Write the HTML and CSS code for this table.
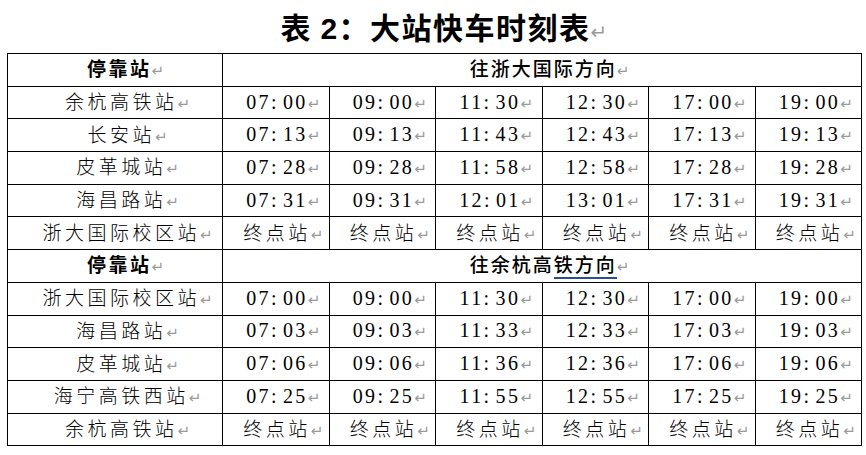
FILE: index.html
```html
<!DOCTYPE html>
<html lang="zh-CN">
<head>
<meta charset="utf-8">
<title>表 2：大站快车时刻表</title>
<link rel="stylesheet" href="styles.css">
</head>
<body>
<div class="page">
  <h1 class="title">表 <span class="tnum">2</span>：大站快车时刻表<span class="pm">↵</span></h1>
  <table class="sched">
    <colgroup>
      <col class="c-st"><col class="c-t"><col class="c-t"><col class="c-t"><col class="c-t"><col class="c-t"><col class="c-t">
    </colgroup>
    <tbody>
      <tr class="hd"><td class="st b">停靠站<span class="pm">↵</span></td><td colspan="6" class="dir">往浙大国际方向<span class="pm">↵</span></td></tr>
      <tr><td class="st">余杭高铁站<span class="pm">↵</span></td><td class="t">07<span class="c">:</span>00<span class="pm">↵</span></td><td class="t">09<span class="c">:</span>00<span class="pm">↵</span></td><td class="t">11<span class="c">:</span>30<span class="pm">↵</span></td><td class="t">12<span class="c">:</span>30<span class="pm">↵</span></td><td class="t">17<span class="c">:</span>00<span class="pm">↵</span></td><td class="t">19<span class="c">:</span>00<span class="pm">↵</span></td></tr>
      <tr><td class="st">长安站<span class="pm">↵</span></td><td class="t">07<span class="c">:</span>13<span class="pm">↵</span></td><td class="t">09<span class="c">:</span>13<span class="pm">↵</span></td><td class="t">11<span class="c">:</span>43<span class="pm">↵</span></td><td class="t">12<span class="c">:</span>43<span class="pm">↵</span></td><td class="t">17<span class="c">:</span>13<span class="pm">↵</span></td><td class="t">19<span class="c">:</span>13<span class="pm">↵</span></td></tr>
      <tr><td class="st">皮革城站<span class="pm">↵</span></td><td class="t">07<span class="c">:</span>28<span class="pm">↵</span></td><td class="t">09<span class="c">:</span>28<span class="pm">↵</span></td><td class="t">11<span class="c">:</span>58<span class="pm">↵</span></td><td class="t">12<span class="c">:</span>58<span class="pm">↵</span></td><td class="t">17<span class="c">:</span>28<span class="pm">↵</span></td><td class="t">19<span class="c">:</span>28<span class="pm">↵</span></td></tr>
      <tr><td class="st">海昌路站<span class="pm">↵</span></td><td class="t">07<span class="c">:</span>31<span class="pm">↵</span></td><td class="t">09<span class="c">:</span>31<span class="pm">↵</span></td><td class="t">12<span class="c">:</span>01<span class="pm">↵</span></td><td class="t">13<span class="c">:</span>01<span class="pm">↵</span></td><td class="t">17<span class="c">:</span>31<span class="pm">↵</span></td><td class="t">19<span class="c">:</span>31<span class="pm">↵</span></td></tr>
      <tr><td class="st">浙大国际校区站<span class="pm">↵</span></td><td class="end">终点站<span class="pm">↵</span></td><td class="end">终点站<span class="pm">↵</span></td><td class="end">终点站<span class="pm">↵</span></td><td class="end">终点站<span class="pm">↵</span></td><td class="end">终点站<span class="pm">↵</span></td><td class="end">终点站<span class="pm">↵</span></td></tr>
      <tr class="hd"><td class="st b">停靠站<span class="pm">↵</span></td><td colspan="6" class="dir">往余杭高<span class="ul">铁方向</span><span class="pm">↵</span></td></tr>
      <tr><td class="st">浙大国际校区站<span class="pm">↵</span></td><td class="t">07<span class="c">:</span>00<span class="pm">↵</span></td><td class="t">09<span class="c">:</span>00<span class="pm">↵</span></td><td class="t">11<span class="c">:</span>30<span class="pm">↵</span></td><td class="t">12<span class="c">:</span>30<span class="pm">↵</span></td><td class="t">17<span class="c">:</span>00<span class="pm">↵</span></td><td class="t">19<span class="c">:</span>00<span class="pm">↵</span></td></tr>
      <tr><td class="st">海昌路站<span class="pm">↵</span></td><td class="t">07<span class="c">:</span>03<span class="pm">↵</span></td><td class="t">09<span class="c">:</span>03<span class="pm">↵</span></td><td class="t">11<span class="c">:</span>33<span class="pm">↵</span></td><td class="t">12<span class="c">:</span>33<span class="pm">↵</span></td><td class="t">17<span class="c">:</span>03<span class="pm">↵</span></td><td class="t">19<span class="c">:</span>03<span class="pm">↵</span></td></tr>
      <tr><td class="st">皮革城站<span class="pm">↵</span></td><td class="t">07<span class="c">:</span>06<span class="pm">↵</span></td><td class="t">09<span class="c">:</span>06<span class="pm">↵</span></td><td class="t">11<span class="c">:</span>36<span class="pm">↵</span></td><td class="t">12<span class="c">:</span>36<span class="pm">↵</span></td><td class="t">17<span class="c">:</span>06<span class="pm">↵</span></td><td class="t">19<span class="c">:</span>06<span class="pm">↵</span></td></tr>
      <tr><td class="st">海宁高铁西站<span class="pm">↵</span></td><td class="t">07<span class="c">:</span>25<span class="pm">↵</span></td><td class="t">09<span class="c">:</span>25<span class="pm">↵</span></td><td class="t">11<span class="c">:</span>55<span class="pm">↵</span></td><td class="t">12<span class="c">:</span>55<span class="pm">↵</span></td><td class="t">17<span class="c">:</span>25<span class="pm">↵</span></td><td class="t">19<span class="c">:</span>25<span class="pm">↵</span></td></tr>
      <tr><td class="st">余杭高铁站<span class="pm">↵</span></td><td class="end">终点站<span class="pm">↵</span></td><td class="end">终点站<span class="pm">↵</span></td><td class="end">终点站<span class="pm">↵</span></td><td class="end">终点站<span class="pm">↵</span></td><td class="end">终点站<span class="pm">↵</span></td><td class="end">终点站<span class="pm">↵</span></td></tr>
    </tbody>
  </table>
</div>
</body>
</html>
```

FILE: styles.css
```css
html, body {
  margin: 0;
  padding: 0;
  background: #fff;
}

.page {
  width: 866px;
  height: 455px;
  padding-left: 7px;
  box-sizing: border-box;
  overflow: hidden;
  font-family: "Noto Sans CJK SC", sans-serif;
  color: #000;
}

.title {
  margin: 0;
  width: 853px;
  height: 53px;
  line-height: 53px;
  text-align: center;
  font-family: "Noto Sans CJK SC", sans-serif;
  font-size: 30px;
  font-weight: 600;
  letter-spacing: 1.5px;
  padding-left: 6px;
  box-sizing: border-box;
}

.title .tnum {
  font-family: "Liberation Sans", sans-serif;
  font-weight: 700;
}

.title .pm {
  font-size: 20px;
  letter-spacing: 0;
}

.sched {
  border-collapse: collapse;
  table-layout: fixed;
  width: 854px;
}

.c-st { width: 215px; }
.c-t { width: 106.5px; }

.sched td {
  border: 1px solid #000;
  height: 31.7px;
  padding: 0;
  text-align: center;
  vertical-align: middle;
  white-space: nowrap;
  font-size: 19px;
  line-height: 20px;
  font-weight: 300;
  letter-spacing: 3.5px;
}

.sched td.st {
  padding-left: 10px;
}

.sched td.b {
  font-weight: 700;
  letter-spacing: 2.5px;
  padding-left: 6px;
}

.sched td.dir {
  font-weight: 500;
  letter-spacing: 2px;
}

.sched td.t {
  font-family: "Liberation Serif", serif;
  font-size: 20px;
  letter-spacing: 2.4px;
  font-weight: 400;
}

.sched td.end {
  letter-spacing: 3.5px;
}

.c {
  margin-right: 4px;
}

.ul {
  border-bottom: 2px solid #2c4f8c;
}

.pm {
  font-family: "DejaVu Sans", sans-serif;
  font-size: 15px;
  font-weight: 400;
  color: #9a9a9a;
  letter-spacing: 0;
  margin-right: -15px;
}
```
